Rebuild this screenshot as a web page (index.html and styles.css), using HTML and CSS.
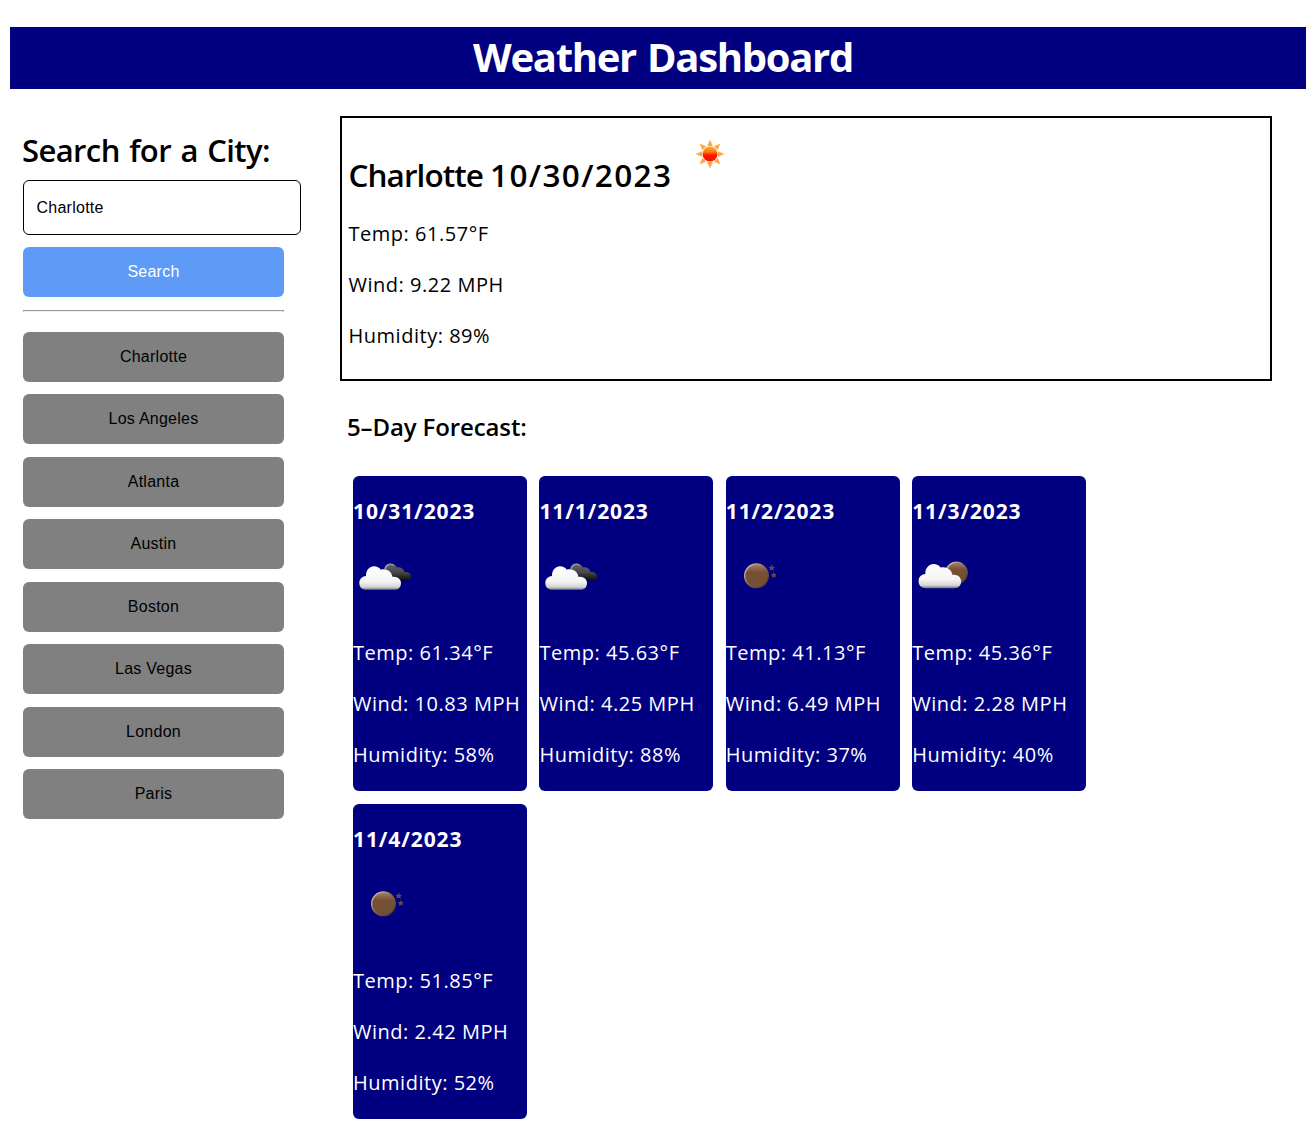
FILE: index.html
```html
<!DOCTYPE html>
<html lang="en">
<head>
<meta charset="utf-8">
<title>Weather Dashboard</title>
<link rel="stylesheet" href="styles.css">
</head>
<body>
<svg class="defs" width="0" height="0" aria-hidden="true">
  <defs>
    <linearGradient id="sunFill" x1="0" y1="0" x2="0" y2="1"><stop offset="0" stop-color="#ffac2b"/><stop offset=".35" stop-color="#ff7a10"/><stop offset=".6" stop-color="#ff1200"/><stop offset="1" stop-color="#fa1400"/></linearGradient>
    <linearGradient id="cloudFill" x1="0" y1="0" x2="0" y2="1"><stop offset="0" stop-color="#fff"/><stop offset=".65" stop-color="#f4f4f4"/><stop offset=".88" stop-color="#d5d5d5"/><stop offset="1" stop-color="#777"/></linearGradient>
    <linearGradient id="darkFill" x1="0" y1="0" x2="0" y2="1"><stop offset="0" stop-color="#666"/><stop offset=".5" stop-color="#4a4a4a"/><stop offset="1" stop-color="#0c0c0c"/></linearGradient>
    <linearGradient id="moonFill" x1="0" y1="0" x2="0" y2="1"><stop offset="0" stop-color="#a5826e"/><stop offset=".35" stop-color="#765032"/><stop offset="1" stop-color="#71503a"/></linearGradient>
    <linearGradient id="moonRim" x1="0" y1="0" x2="1" y2="1"><stop offset="0" stop-color="#e3d0c8"/><stop offset=".5" stop-color="#8a6448"/><stop offset="1" stop-color="#3d2830"/></linearGradient>
    <symbol id="cloud" viewBox="6 20 43 25"><path d="M13.500 44.300C9 44.300 6.300 41.500 6.300 37.500C6.300 33.500 9.500 30.500 13 30.500C12.500 25 16.500 20.700 21 20.700C24 20.700 26.500 22 27.800 24.200C33 22.500 39 26 39.300 31.300C44 30.500 48 33.500 48 37.500C48 41.500 45.500 44.300 41.500 44.300Z" fill="url(#cloudFill)"/></symbol>
    <symbol id="broken" viewBox="0 0 60 60"><path d="M31 26C31 21 34 17.700 38 17.700C41 17.700 43 19.500 44 21.500C47.500 20.500 51 23 51.500 26C55 25.500 58 27.500 58 30.500C58 33 56 34.500 53 34.500H38Z" fill="url(#darkFill)"/><path d="M32 23C33 18 38 17 41 19.500" fill="none" stroke="#999" stroke-width="1.500"/><use href="#cloud" x="6" y="19.500" width="43" height="25"/></symbol>
    <symbol id="moon" viewBox="0 0 60 60"><circle cx="30.500" cy="29.800" r="11.800" fill="url(#moonFill)" stroke="url(#moonRim)" stroke-width="1.500"/><path d="M45.700 18.500L46.700 20.700L49 21L47.300 22.500L47.800 24.800L45.700 23.500L43.600 24.800L44.100 22.500L42.400 21L44.700 20.700Z" fill="#604b55"/><path d="M47.700 26L48.600 28L50.700 28.300L49.200 29.700L49.600 31.800L47.700 30.700L45.800 31.800L46.200 29.700L44.700 28.300L46.800 28Z" fill="#604b55"/></symbol>
    <symbol id="partly" viewBox="0 0 60 60"><circle cx="44.500" cy="27" r="10.700" fill="url(#moonFill)" stroke="url(#moonRim)" stroke-width="1.500"/><use href="#cloud" x="6.200" y="17.300" width="44" height="25.600"/></symbol>
  </defs>
</svg>
<header class="banner"><h1>Weather Dashboard</h1></header>
<div class="layout">
  <aside class="sidebar">
    <h2>Search for a City:</h2>
    <input class="city" type="text" value="Charlotte" aria-label="City">
    <button class="search">Search</button>
    <hr>
    <nav class="history">
      <button>Charlotte</button>
      <button>Los Angeles</button>
      <button>Atlanta</button>
      <button>Austin</button>
      <button>Boston</button>
      <button>Las Vegas</button>
      <button>London</button>
      <button>Paris</button>
    </nav>
  </aside>
  <main class="content">
    <section class="today">
      <div class="today-head">
        <h2>Charlotte <span class="date">10/30/2023</span></h2>
        <svg class="sun" viewBox="0 0 50 50"><path d="M25 11L27.500 17H22.500ZM25 39L27.500 33H22.500ZM11 25L17 22.500V27.500ZM39 25L33 22.500V27.500ZM15 15L21 17.500L17.500 21ZM35 15L29 17.500L32.500 21ZM15 35L21 32.500L17.500 29ZM35 35L29 32.500L32.500 29Z" fill="#ffa43a" stroke="#ffb45a" stroke-width=".5"/><circle cx="25" cy="25" r="7.500" fill="url(#sunFill)"/></svg>
      </div>
      <p>Temp: 61.57°F</p>
      <p>Wind: 9.22 MPH</p>
      <p>Humidity: 89%</p>
    </section>
    <h3 class="forecast-title">5–Day Forecast:</h3>
    <section class="forecast">
      <article class="card"><h4>10/31/2023</h4><svg class="icon"><use href="#broken"/></svg><p>Temp: 61.34°F</p><p>Wind: 10.83 MPH</p><p>Humidity: 58%</p></article>
      <article class="card"><h4>11/1/2023</h4><svg class="icon"><use href="#broken"/></svg><p>Temp: 45.63°F</p><p>Wind: 4.25 MPH</p><p>Humidity: 88%</p></article>
      <article class="card"><h4>11/2/2023</h4><svg class="icon"><use href="#moon"/></svg><p>Temp: 41.13°F</p><p>Wind: 6.49 MPH</p><p>Humidity: 37%</p></article>
      <article class="card"><h4>11/3/2023</h4><svg class="icon"><use href="#partly"/></svg><p>Temp: 45.36°F</p><p>Wind: 2.28 MPH</p><p>Humidity: 40%</p></article>
      <article class="card"><h4>11/4/2023</h4><svg class="icon"><use href="#moon"/></svg><p>Temp: 51.85°F</p><p>Wind: 2.42 MPH</p><p>Humidity: 52%</p></article>
    </section>
  </main>
</div>
</body>
</html>
```
FILE: styles.css
```css
* { box-sizing: border-box; }
html, body { height: 100%; overflow: hidden; }
body { margin: 0; padding-top: 27px; background: #fff; color: #000; font-family: "Lucida Sans", "Open Sans", "Noto Sans", sans-serif; }
h1, h2, h3, h4, p { margin: 0; white-space: nowrap; }
.defs { position: absolute; }
.banner { width: 1306px; height: 62px; margin-left: 10px; background: #000080; color: #fff; text-align: center; }
.banner h1 { font-size: 40px; line-height: 60px; font-weight: 700; letter-spacing: -1.300px; word-spacing: 2px; }
.layout { display: flex; }
.sidebar { width: 340px; padding: 40px 0 0 23px; }
.sidebar h2 { margin-left: -1px; font-size: 31px; line-height: 42px; height: 51px; font-weight: 600; letter-spacing: -.6px; word-spacing: 2px; }
button, .city { font: 16px "Liberation Sans", Arial, sans-serif; letter-spacing: .25px; }
.city { display: block; width: 278px; height: 55px; margin: 0 0 12px; padding: 0 12.500px; border: 1px solid #000; border-radius: 6px; background: #fff; color: #000; }
button { display: block; width: 261px; height: 50px; padding: 0; border: 0; border-radius: 6px; background: #808080; color: #000; }
.search { background: #5e9bf7; color: #fff; }
hr { width: 261px; margin: 13px 0 20px; border: 1px solid #9a9a9a; border-bottom-color: #eee; }
.history { display: flex; flex-direction: column; gap: 12.450px; }
.content { width: 932px; padding-top: 27px; }
.today { height: 265px; padding: 0 6.500px; border: 2px solid #000; }
.today-head { display: flex; height: 90px; padding-top: 11px; }
.today h2 { width: 323px; font-size: 31.500px; line-height: 92px; height: 79px; font-weight: 600; letter-spacing: -.95px; }
.date { letter-spacing: 1.350px; }
.sun { width: 50px; height: 50px; margin-left: 13.500px; flex: none; }
p { font-size: 20px; line-height: 51px; letter-spacing: .52px; }
.forecast-title { padding-left: 7px; height: 95px; font-size: 24px; line-height: 92px; font-weight: 600; letter-spacing: -.12px; }
.forecast { display: flex; flex-wrap: wrap; gap: 12.500px 12.400px; padding-left: 13px; width: 790px; }
.card { width: 174px; height: 315px; border-radius: 6px; background: #000080; color: #fff; }
.card h4 { height: 70px; font-size: 21px; line-height: 70px; font-weight: 700; letter-spacing: .88px; }
.icon { display: block; width: 60px; height: 60px; margin-bottom: 21px; }
```
